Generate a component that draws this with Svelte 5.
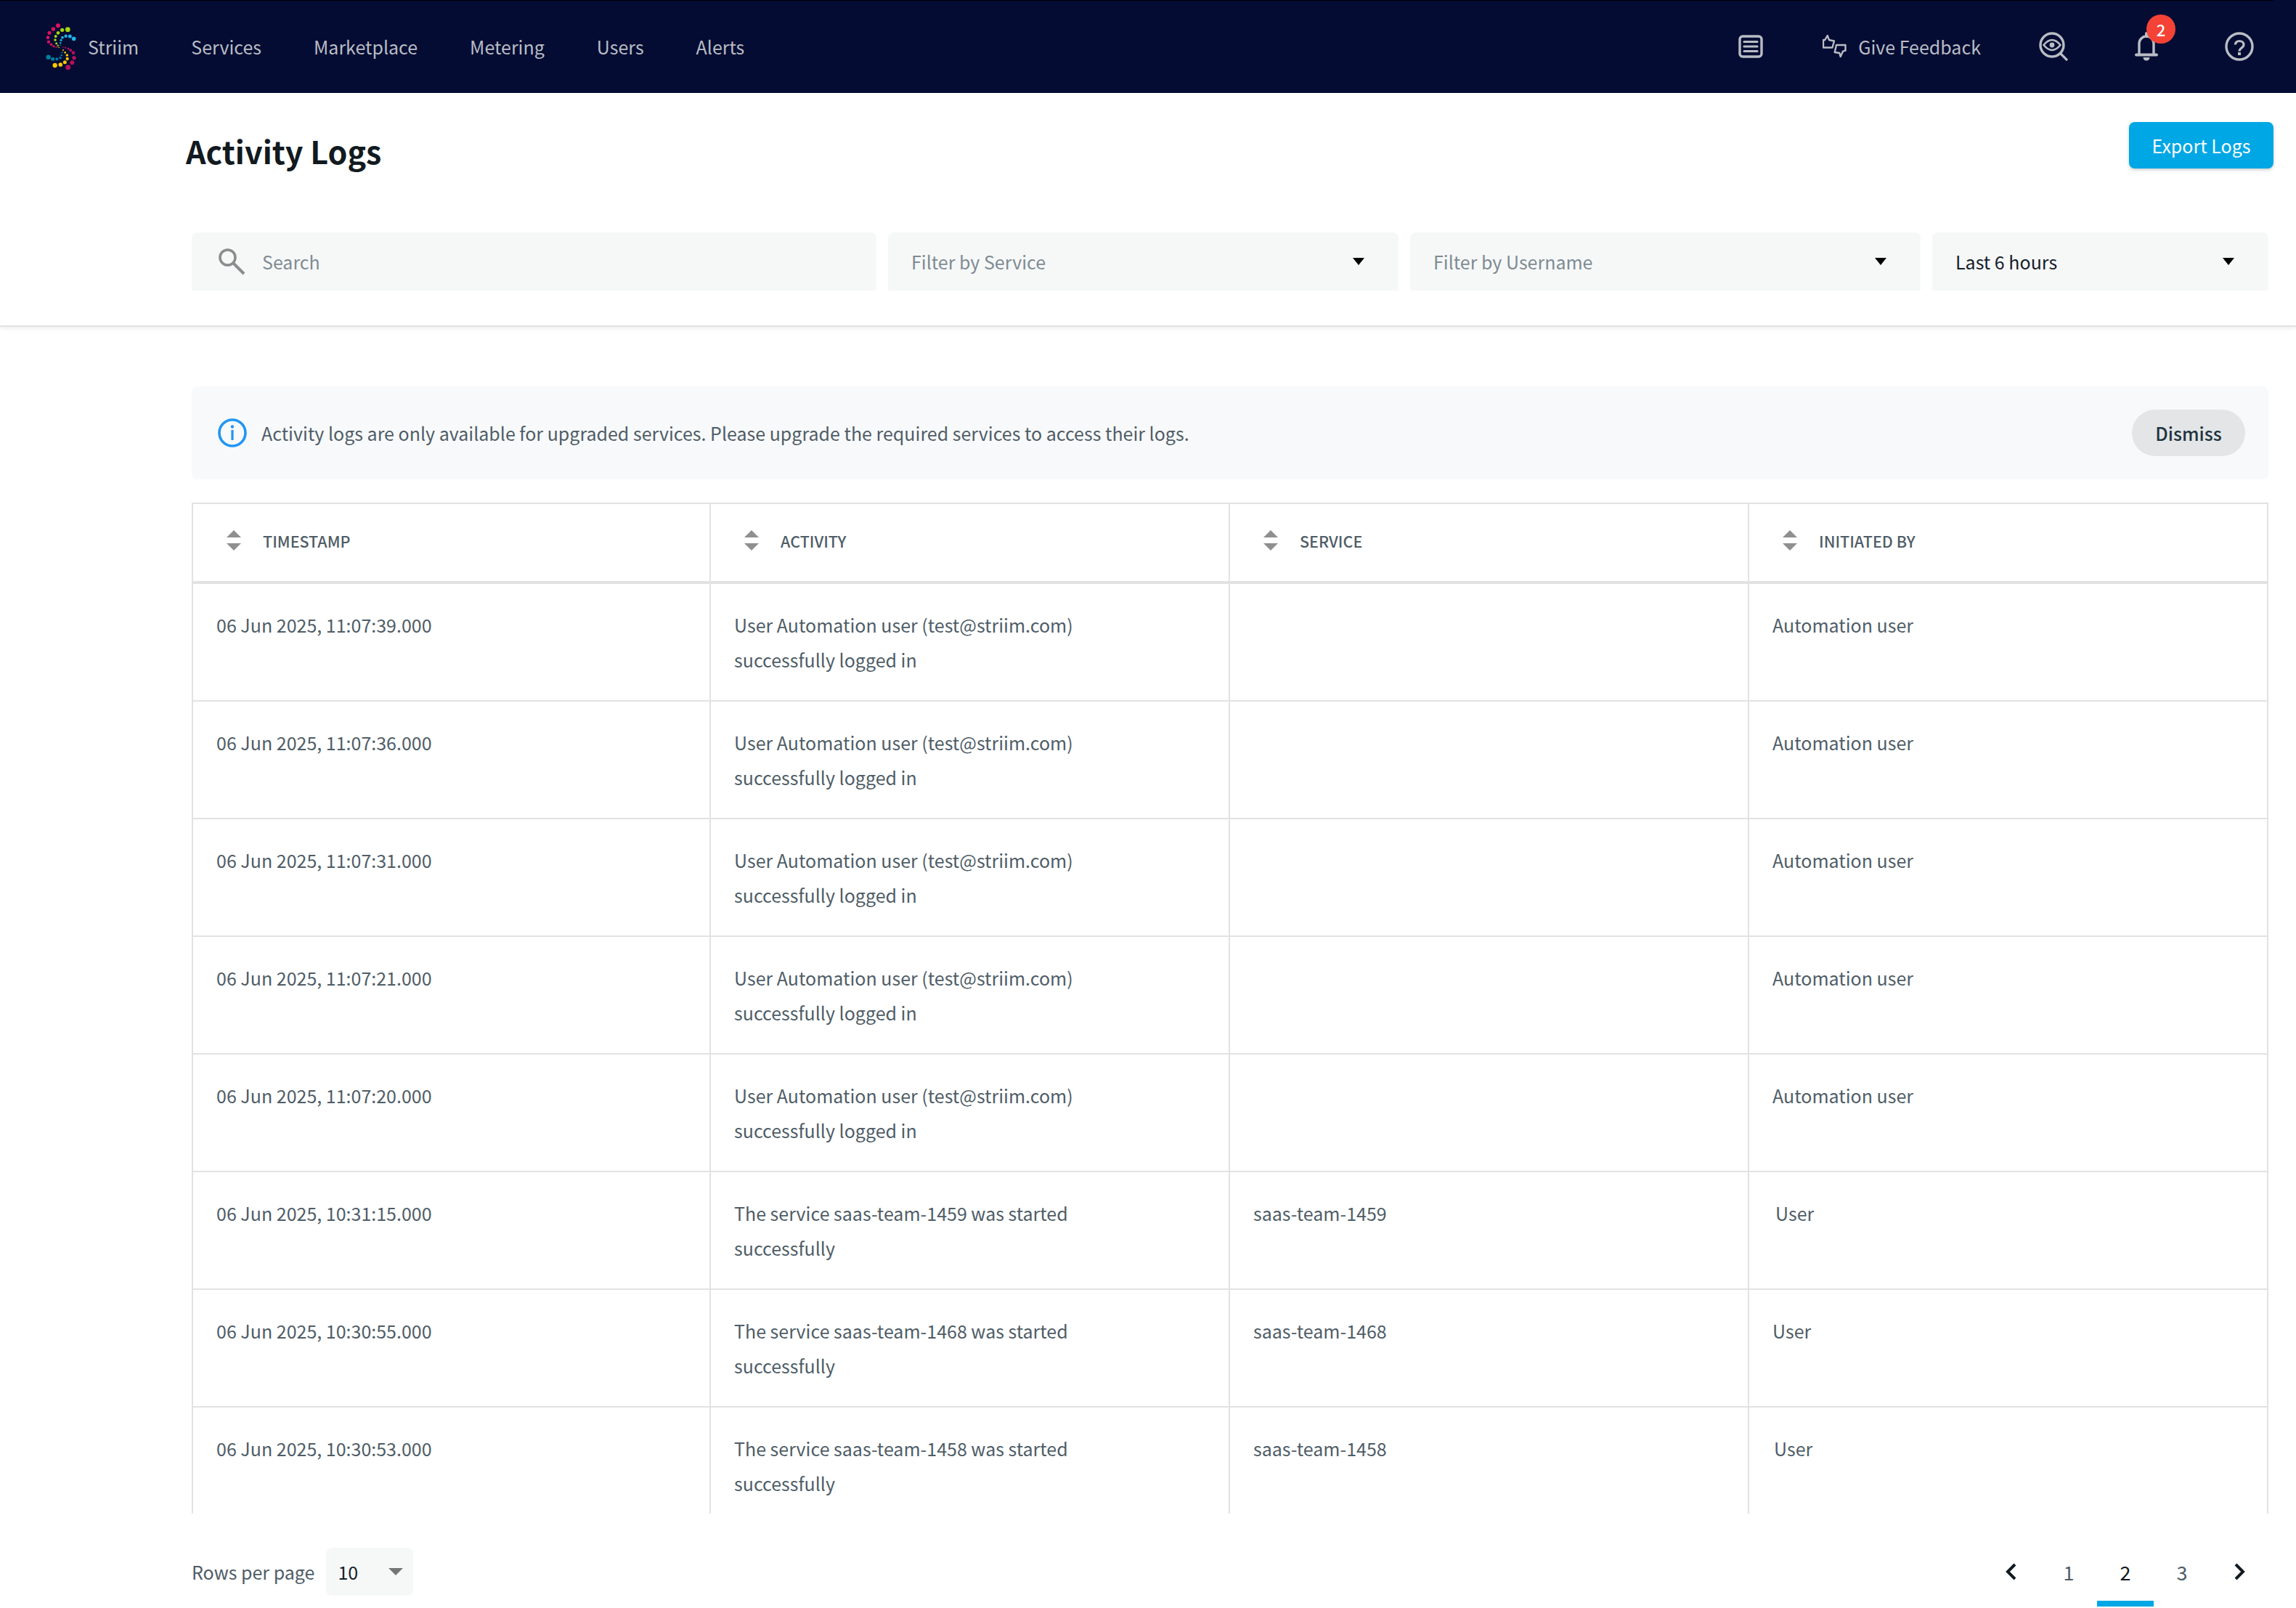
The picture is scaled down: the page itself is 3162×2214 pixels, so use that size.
<script>
  const nav = ['Services', 'Marketplace', 'Metering', 'Users', 'Alerts'];
  const columns = ['Timestamp', 'Activity', 'Service', 'Initiated by'];
  const pages = [1, 2, 3];

  const userLogin = 'User Automation user (test@striim.com) successfully logged in';
  const rows = [
    { time: '06 Jun 2025, 11:07:39.000', activity: userLogin, service: '', by: 'Automation user', nudge: 0 },
    { time: '06 Jun 2025, 11:07:36.000', activity: userLogin, service: '', by: 'Automation user', nudge: 0 },
    { time: '06 Jun 2025, 11:07:31.000', activity: userLogin, service: '', by: 'Automation user', nudge: 0 },
    { time: '06 Jun 2025, 11:07:21.000', activity: userLogin, service: '', by: 'Automation user', nudge: 0 },
    { time: '06 Jun 2025, 11:07:20.000', activity: userLogin, service: '', by: 'Automation user', nudge: 0 },
    { time: '06 Jun 2025, 10:31:15.000', activity: 'The service saas-team-1459 was started successfully', service: 'saas-team-1459', by: 'User', nudge: 4 },
    { time: '06 Jun 2025, 10:30:55.000', activity: 'The service saas-team-1468 was started successfully', service: 'saas-team-1468', by: 'User', nudge: 0 },
    { time: '06 Jun 2025, 10:30:53.000', activity: 'The service saas-team-1458 was started successfully', service: 'saas-team-1458', by: 'User', nudge: 2 }
  ];

  // logo dots: x, y, r, colour
  const dots = [
    [151,75,9,'#e0105f'],[131,89,8,'#e0105f'],[115,105,7.5,'#e0105f'],[109,124,7,'#e0105f'],[112,142,6.5,'#e0105f'],[123,153,5.5,'#e0105f'],[133,160,4.5,'#e0105f'],[143,164,3,'#e0105f'],[151,165,2.5,'#e0105f'],
    [191,91,10,'#a8d40f'],[168,93,8,'#a8d40f'],[151,105,7,'#a8d40f'],[141,119,6,'#a8d40f'],[139,134,5.5,'#a8d40f'],[144,148,4.5,'#a8d40f'],[150,157,3.5,'#a8d40f'],[155,165,2.5,'#a8d40f'],
    [216,129,8.5,'#1eb6e8'],[200,119,7.5,'#1eb6e8'],[183,118,6.5,'#1eb6e8'],[169,124,5.5,'#1eb6e8'],[163,135,4.5,'#1eb6e8'],[161,146,3.5,'#1eb6e8'],[160,155,2.5,'#1eb6e8'],
    [192,247,10.5,'#b4105c'],[209,228,9,'#b4105c'],[217,208,8,'#b4105c'],[214,187,7,'#b4105c'],[203,177,6,'#b4105c'],[193,170,4.5,'#b4105c'],[181,166,3.5,'#b4105c'],[172,164,2.5,'#b4105c'],
    [138,239,9.5,'#ffc800'],[161,236,8.5,'#ffc800'],[179,226,7.5,'#ffc800'],[189,212,6.5,'#ffc800'],[188,197,5.5,'#ffc800'],[180,186,4,'#ffc800'],[172,176,3,'#ffc800'],
    [111,205,9.5,'#007f9f'],[129,213,7.5,'#007f9f'],[146,213,6,'#007f9f'],[160,208,5,'#007f9f'],[165,197,4,'#007f9f'],[168,186,3,'#007f9f']
  ];
</script>

<div class="page">
  <header class="topnav">
    <div class="brand">
      <svg class="logo" viewBox="100 65 126 192" aria-hidden="true">
        {#each dots as [x, y, r, c]}
          <circle cx={x} cy={y} r={r} fill={c} />
        {/each}
      </svg>
      <span>Striim</span>
    </div>
    <nav>
      {#each nav as item}
        <span>{item}</span>
      {/each}
    </nav>
    <div class="actions">
      <svg class="ic-list" viewBox="0 0 34 32" aria-hidden="true">
        <rect x="2" y="2" width="30" height="28" rx="4" fill="none" stroke="currentColor" stroke-width="3.4" />
        <path d="M8 9.5h18M8 16h18M8 22.5h18" fill="none" stroke="currentColor" stroke-width="3.2" stroke-linecap="round" />
      </svg>
      <div class="feedback">
        <svg viewBox="0 0 33 32" aria-hidden="true">
          <path d="M1 7v10.5h12.5L16 8.5 9 7 6.7 1 3.3 7z" fill="none" stroke="currentColor" stroke-width="2.4" stroke-linejoin="round" />
          <path d="M31.5 14v7.7l-3.5 1-3.3 7.3-1.4-5-6.6-1 2.3-10z" fill="none" stroke="currentColor" stroke-width="2.4" stroke-linejoin="round" />
        </svg>
        <span>Give Feedback</span>
      </div>
      <svg class="ic-eye" viewBox="0 0 40 40" aria-hidden="true">
        <circle cx="18" cy="18" r="16" fill="none" stroke="currentColor" stroke-width="3.4" />
        <path d="M6.5 18Q18 4 29.5 18 18 32 6.5 18z" fill="none" stroke="currentColor" stroke-width="2.6" />
        <circle cx="18" cy="18" r="3.4" fill="currentColor" />
        <path d="M29 29l10 10" stroke="currentColor" stroke-width="3.2" />
      </svg>
      <div class="bell">
        <svg viewBox="0 0 32 40" aria-hidden="true">
          <path d="M6 31V16a10 10 0 0 1 20 0v15" fill="none" stroke="currentColor" stroke-width="3.4" />
          <path d="M2 31.5h28" stroke="currentColor" stroke-width="4" stroke-linecap="round" />
          <path d="M16 2v4" stroke="currentColor" stroke-width="4" stroke-linecap="round" />
          <path d="M11.5 35h9a4.5 4.5 0 0 1-9 0z" fill="currentColor" />
        </svg>
        <span class="badge">2</span>
      </div>
      <svg class="ic-help" viewBox="0 0 40 40" aria-hidden="true">
        <circle cx="20" cy="20" r="18" fill="none" stroke="currentColor" stroke-width="3.4" />
        <path d="M14.5 17.5c0-3.2 2.4-5 5.5-5s6 2 6 5c0 4.5-6 4.5-6 9" fill="none" stroke="currentColor" stroke-width="3.2" />
        <rect x="18" y="28" width="4" height="4" fill="currentColor" />
      </svg>
    </div>
  </header>

  <section class="toolbar">
    <div class="title-row">
      <h1>Activity Logs</h1>
      <button class="export">Export Logs</button>
    </div>
    <div class="filters">
      <div class="field search">
        <svg viewBox="0 0 38 38" aria-hidden="true">
          <circle cx="13.5" cy="13.5" r="10.5" fill="none" stroke="currentColor" stroke-width="3.6" />
          <path d="M21 21l15 15" stroke="currentColor" stroke-width="4" />
        </svg>
        <span class="placeholder">Search</span>
      </div>
      <div class="field">
        <span class="placeholder">Filter by Service</span>
        <i class="caret"></i>
      </div>
      <div class="field">
        <span class="placeholder">Filter by Username</span>
        <i class="caret"></i>
      </div>
      <div class="field">
        <span class="value">Last 6 hours</span>
        <i class="caret"></i>
      </div>
    </div>
  </section>

  <main>
    <div class="notice">
      <svg viewBox="0 0 40 40" aria-hidden="true">
        <circle cx="20" cy="20" r="18" fill="none" stroke="#2196f3" stroke-width="3.6" />
        <circle cx="20" cy="11.5" r="2.2" fill="#2196f3" />
        <rect x="18.4" y="16" width="3.2" height="14" fill="#2196f3" />
      </svg>
      <p>Activity logs are only available for upgraded services. Please upgrade the required services to access their logs.</p>
      <button class="dismiss">Dismiss</button>
    </div>

    <div class="table-wrap">
      <table>
        <thead>
          <tr>
            {#each columns as col}
              <th>
                <div class="th-inner">
                  <span class="sort"><i class="up"></i><i class="down"></i></span>
                  {col}
                </div>
              </th>
            {/each}
          </tr>
        </thead>
        <tbody>
          {#each rows as row}
            <tr>
              <td>{row.time}</td>
              <td><div class="activity">{row.activity}</div></td>
              <td>{row.service}</td>
              <td><span style="margin-left: {row.nudge}px">{row.by}</span></td>
            </tr>
          {/each}
        </tbody>
      </table>
    </div>

    <footer>
      <div class="per-page">
        <span>Rows per page</span>
        <div class="rows-select">
          <span>10</span>
          <i class="caret-grey"></i>
        </div>
      </div>
      <div class="pager">
        <svg class="chev" viewBox="0 0 15 24" aria-hidden="true">
          <path d="M13 2L3 12l10 10" fill="none" stroke="currentColor" stroke-width="4" />
        </svg>
        {#each pages as p}
          <span class="page-num" class:current={p === 2}>{p}</span>
        {/each}
        <svg class="chev" viewBox="0 0 15 24" aria-hidden="true">
          <path d="M2 2l10 10L2 22" fill="none" stroke="currentColor" stroke-width="4" />
        </svg>
      </div>
    </footer>
  </main>
</div>

<style>
  :global(body) {
    margin: 0;
    background: #fff;
  }

  .page {
    width: 3162px;
    height: 2214px;
    overflow: hidden;
    font-family: "Noto Sans CJK SC", "Noto Sans", sans-serif;
    font-size: 25px;
    color: #4f5d67;
  }

  .topnav {
    position: relative;
    display: flex;
    align-items: center;
    height: 128px;
    padding: 0 58px 0 63px;
    box-sizing: border-box;
    background: #040c33;
    color: #b9bdc4;
  }

  .topnav::before {
    content: '';
    position: absolute;
    top: 0;
    left: 0;
    width: 3131px;
    height: 1px;
    background: #000;
  }

  .brand {
    display: flex;
    align-items: center;
    gap: 16px;
  }

  .logo {
    width: 42px;
    height: 64px;
  }

  nav {
    display: flex;
    gap: 72px;
    margin-left: 72px;
  }

  .actions {
    display: flex;
    align-items: center;
    margin-left: auto;
  }

  .ic-list {
    width: 34px;
    height: 32px;
  }

  .feedback {
    display: flex;
    align-items: center;
    gap: 16px;
    margin-left: 82px;
  }

  .feedback svg {
    width: 33px;
    height: 32px;
  }

  .ic-eye {
    width: 40px;
    height: 40px;
    margin-left: 80px;
  }

  .bell {
    position: relative;
    width: 32px;
    height: 40px;
    margin-left: 92px;
  }

  .bell svg {
    width: 32px;
    height: 40px;
    display: block;
  }

  .badge {
    position: absolute;
    top: -24px;
    left: 16px;
    width: 40px;
    height: 40px;
    border-radius: 50%;
    background: #f44336;
    color: #fff;
    font-size: 22px;
    font-weight: 500;
    line-height: 40px;
    text-align: center;
  }

  .ic-help {
    width: 40px;
    height: 40px;
    margin-left: 92px;
  }

  .toolbar {
    height: 322px;
    box-sizing: border-box;
    padding: 40px 38px 0 256px;
    border-bottom: 2px solid #e2e2e2;
    box-shadow: 0 3px 5px rgba(0, 0, 0, 0.06);
  }

  .title-row {
    display: flex;
    justify-content: space-between;
    height: 64px;
    margin-right: -7px;
  }

  h1 {
    margin: 7px 0 0;
    font-size: 43px;
    font-weight: 700;
    line-height: 64px;
    color: #121a1f;
  }

  .export {
    width: 199px;
    height: 64px;
    border: 0;
    border-radius: 8px;
    background: #00a7e5;
    color: #fff;
    font: inherit;
    box-shadow: 0 2px 4px rgba(0, 0, 0, 0.2);
  }

  .filters {
    display: grid;
    grid-template-columns: 943px 703px 703px 1fr;
    gap: 16px;
    margin: 88px 0 0 8px;
  }

  .field {
    display: flex;
    align-items: center;
    justify-content: space-between;
    height: 80px;
    box-sizing: border-box;
    padding: 0 47px 0 32px;
    background: #f6f8f8;
    border-radius: 8px 8px 0 0;
  }

  .field.search {
    justify-content: flex-start;
    gap: 23px;
    padding-left: 36px;
    color: #8a8d8e;
  }

  .field.search svg {
    width: 38px;
    height: 38px;
  }

  .placeholder {
    color: #7f8b93;
  }

  .value {
    color: #16202a;
  }

  .caret {
    width: 0;
    height: 0;
    border-left: 8px solid transparent;
    border-right: 8px solid transparent;
    border-top: 10px solid #000;
  }

  main {
    padding: 82px 38px 0 264px;
  }

  .notice {
    display: flex;
    align-items: center;
    height: 128px;
    box-sizing: border-box;
    padding: 0 32px 0 36px;
    background: #f8f9fa;
    border-radius: 8px;
  }

  .notice svg {
    width: 40px;
    height: 40px;
    flex: none;
  }

  .notice p {
    margin: 0 0 0 20px;
    flex: 1;
  }

  .dismiss {
    width: 156px;
    height: 64px;
    border: 0;
    border-radius: 32px;
    background: #e3e5e7;
    color: #1f333d;
    font: inherit;
    font-weight: 500;
  }

  .table-wrap {
    height: 1392px;
    margin-top: 32px;
    overflow: hidden;
  }

  table {
    width: 100%;
    table-layout: fixed;
    border-collapse: collapse;
  }

  th {
    height: 106px;
    padding: 0;
    border: 2px solid #e2e2e2;
    border-bottom-width: 4px;
    font-size: 21.5px;
    font-weight: 500;
    text-align: left;
    text-transform: uppercase;
  }

  th:first-child {
    width: 711px;
  }

  .th-inner {
    display: flex;
    align-items: center;
    gap: 30px;
    padding: 0 0 6px 46px;
  }

  .sort {
    display: flex;
    flex-direction: column;
    gap: 8px;
  }

  .sort i {
    display: block;
    width: 0;
    height: 0;
    border-left: 10px solid transparent;
    border-right: 10px solid transparent;
  }

  .sort .up {
    border-bottom: 10px solid #8f8f8f;
  }

  .sort .down {
    border-top: 10px solid #8f8f8f;
  }

  td {
    box-sizing: content-box;
    padding: 32px;
    height: 96px;
    border: 2px solid #e2e2e2;
    line-height: 48px;
    vertical-align: top;
  }

  .activity {
    max-width: 500px;
  }

  footer {
    display: flex;
    justify-content: space-between;
    margin-top: 47px;
  }

  .per-page {
    display: flex;
    align-items: center;
    gap: 16px;
  }

  .rows-select {
    display: flex;
    align-items: center;
    justify-content: space-between;
    width: 120px;
    height: 66px;
    box-sizing: border-box;
    padding: 0 14px 0 16px;
    background: #f6f8f8;
    border-radius: 8px;
    color: #16202a;
  }

  .caret-grey {
    width: 0;
    height: 0;
    border-left: 10px solid transparent;
    border-right: 10px solid transparent;
    border-top: 10px solid #757575;
  }

  .pager {
    display: flex;
    align-items: center;
    height: 66px;
    margin-right: 32px;
    color: #121a1f;
    font-size: 27px;
  }

  .chev {
    width: 15px;
    height: 24px;
  }

  .page-num {
    position: relative;
    width: 78px;
    text-align: center;
    color: #4f5d67;
  }

  .page-num:first-of-type {
    margin-left: 33px;
  }

  .page-num:last-of-type {
    margin-right: 33px;
  }

  .page-num.current {
    color: #121a1f;
  }

  .page-num.current::after {
    content: '';
    position: absolute;
    left: 0;
    right: 0;
    bottom: -28px;
    height: 8px;
    background: #00a7e5;
  }
</style>
